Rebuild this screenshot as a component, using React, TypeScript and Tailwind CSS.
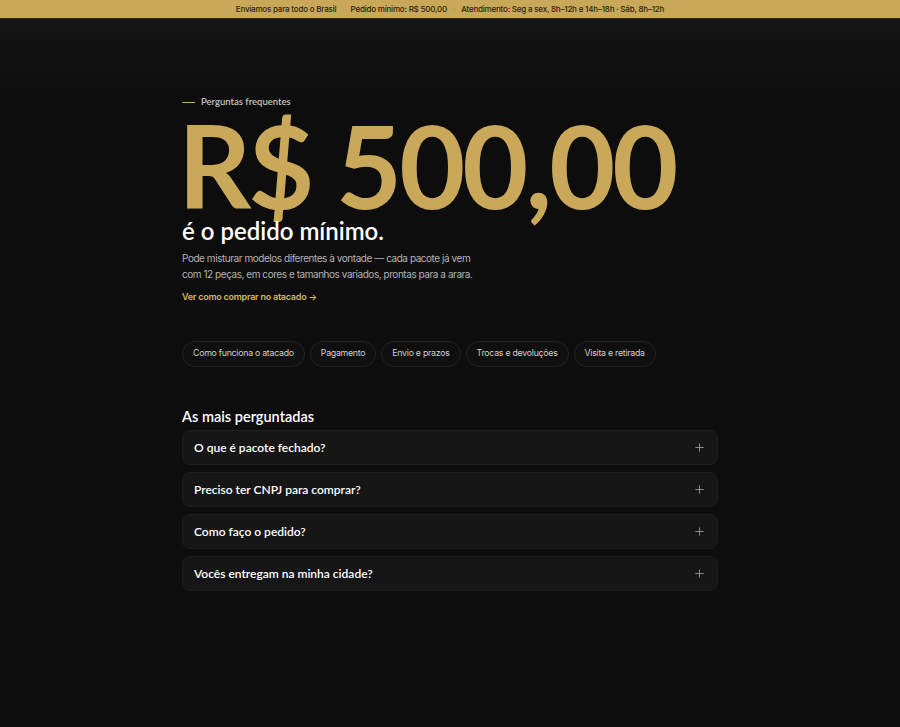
import { Plus } from 'lucide-react'

const topics = ['Como funciona o atacado', 'Pagamento', 'Envio e prazos', 'Trocas e devoluções', 'Visita e retirada']

const questions = [
  'O que é pacote fechado?',
  'Preciso ter CNPJ para comprar?',
  'Como faço o pedido?',
  'Vocês entregam na minha cidade?',
]

const heading = { fontFamily: 'Lato, "Noto Sans", sans-serif' }

export default function App() {
  return (
    <div className="min-h-[727px] bg-[#0d0d0d] text-white" style={{ fontFamily: 'Inter, "Noto Sans", sans-serif' }}>
      {/* Announcement bar */}
      <div className="flex h-[19px] items-center justify-center gap-[6px] border-b border-[#3b2d12] bg-[#c9a85a] text-[8px] font-medium tracking-[-0.2px] text-[#2a1f0b]">
        <span>Enviamos para todo o Brasil</span>
        <span className="text-[#a8894a]">·</span>
        <span>Pedido mínimo: R$ 500,00</span>
        <span className="text-[#a8894a]">·</span>
        <span>Atendimento: Seg a sex, 8h–12h e 14h–18h · Sáb, 8h–12h</span>
      </div>

      <div className="bg-gradient-to-b from-[#151515] to-[#0d0d0d] to-[80px]">
        <main className="mx-auto w-[536px] pt-[76px] pb-[40px]">
          {/* Eyebrow */}
          <div className="flex h-[14px] items-center gap-[6px]">
            <span className="h-px w-[13px] bg-[#c9a85a]" />
            <span className="text-[9.5px] font-semibold leading-[14px] text-[#c4c4c4]" style={heading}>
              Perguntas frequentes
            </span>
          </div>

          <h1 className="mt-[6px]" style={heading}>
            <span className="-ml-[4px] block text-[114px] font-bold leading-[100px] tracking-[-3px] text-[#c9a85a]">
              R$ 500,00
            </span>
            <span className="block text-[24px] font-semibold leading-[32px] text-white">é o pedido mínimo.</span>
          </h1>

          <p className="mt-[3px] whitespace-nowrap text-[10px] leading-[16px] tracking-[-0.45px] text-[#b3b3b3]">
            Pode misturar modelos diferentes à vontade — cada pacote já vem
            <br />
            com 12 peças, em cores e tamanhos variados, prontas para a arara.
          </p>
          <a href="#" className="mt-[6px] inline-block text-[9px] font-semibold tracking-[-0.25px] text-[#d2b46a]">
            Ver como comprar no atacado →
          </a>

          {/* Topic pills */}
          <div className="mt-[35px] flex gap-[5px]">
            {topics.map((t) => (
              <button
                key={t}
                type="button"
                className="h-[26px] whitespace-nowrap rounded-full border border-[#222222] bg-[#0f0f0f] px-[10px] text-[8.75px] tracking-[-0.25px] text-[#cfcfcf]"
              >
                {t}
              </button>
            ))}
          </div>

          <h2 className="mt-[40px] text-[14.5px] font-semibold leading-[20px] text-white" style={heading}>
            As mais perguntadas
          </h2>

          <div className="mt-[3px] flex flex-col gap-[7px]">
            {questions.map((q) => (
              <div
                key={q}
                className="flex h-[35px] items-center justify-between rounded-[8px] border border-[#1d1d1d] bg-[#161616] px-[11px]"
              >
                <span className="text-[12px] font-semibold text-white" style={heading}>
                  {q}
                </span>
                <Plus className="h-[13px] w-[13px] text-[#a0a0a0]" strokeWidth={1.5} />
              </div>
            ))}
          </div>
        </main>
      </div>
    </div>
  )
}
